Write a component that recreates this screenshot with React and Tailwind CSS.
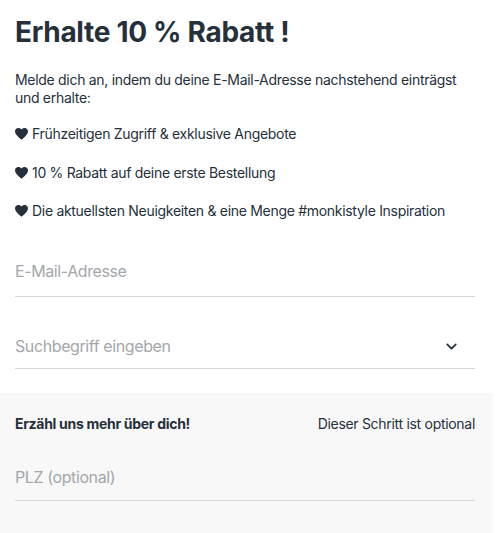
import React from 'react';
import { ChevronDown } from 'lucide-react';

const Heart = () => (
  <svg viewBox="0 0 24 22" className="w-[13px] h-[12px] mr-[4px] shrink-0 fill-[#25303b]">
    <path d="M12 21.5 L10.3 20 C4.2 14.5 0 10.7 0 6.2 0 2.7 2.7 0 6.2 0 8.2 0 10.6 1 12 2.7 13.4 1 15.8 0 17.8 0 21.3 0 24 2.7 24 6.2 24 10.7 19.8 14.5 13.7 20 Z" />
  </svg>
);

const perks = [
  'Frühzeitigen Zugriff & exklusive Angebote',
  '10 % Rabatt auf deine erste Bestellung',
  'Die aktuellsten Neuigkeiten & eine Menge #monkistyle Inspiration',
];

const Field = ({ placeholder, pb, children }) => (
  <div className={`flex items-center border-b border-[#d6d8da] ${pb}`}>
    <input
      placeholder={placeholder}
      className="flex-1 h-6 leading-6 text-[16px] tracking-[-0.4px] bg-transparent outline-none placeholder:text-[#a3a7ab] text-[#25303b]"
    />
    {children}
  </div>
);

export default function App() {
  return (
    <div className="w-[493px] font-['Inter',sans-serif] text-[#25303b] bg-white">
      <div className="pl-[15px] pr-[18px] pt-[15px] pb-[24px]">
        <h1 className="text-[28px] leading-[34px] font-bold tracking-[-0.3px]">Erhalte 10 % Rabatt !</h1>
        <p className="mt-[22px] text-[14px] leading-[18px] tracking-[-0.3px]">
          Melde dich an, indem du deine E-Mail-Adresse nachstehend einträgst und erhalte:
        </p>
        <ul className="mt-[18px] flex flex-col gap-[20.5px] text-[14px] leading-[18px] tracking-[-0.3px]">
          {perks.map((p) => (
            <li key={p} className="flex items-center">
              <Heart />
              {p}
            </li>
          ))}
        </ul>
        <div className="mt-[39px]">
          <Field placeholder="E-Mail-Adresse" pb="pb-[13px]" />
        </div>
        <div className="mt-[37px]">
          <Field placeholder="Suchbegriff eingeben" pb="pb-[10px]">
            <ChevronDown className="w-[17px] h-[17px] mr-[15px]" strokeWidth={2.5} />
          </Field>
        </div>
      </div>
      <div className="bg-[#f8f8f8] pl-[15px] pr-[18px] pt-[22px] pb-[40px]">
        <div className="flex justify-between text-[14px] leading-[18px] tracking-[-0.3px]">
          <span className="font-bold">Erzähl uns mehr über dich!</span>
          <span>Dieser Schritt ist optional</span>
        </div>
        <div className="mt-[32px]">
          <Field placeholder="PLZ (optional)" pb="pb-[11px]" />
        </div>
      </div>
    </div>
  );
}
